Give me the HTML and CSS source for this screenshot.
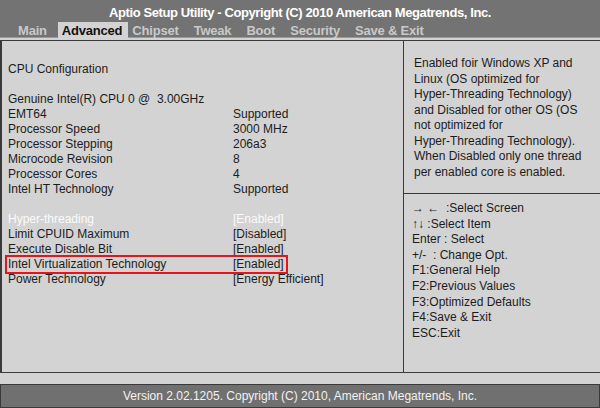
FILE: index.html
```html
<!DOCTYPE html>
<html lang="en">
<head>
    <meta charset="UTF-8">
    <title>Aptio Setup Utility</title>
    <link rel="stylesheet" href="styles.css">
</head>
<body>
    <div class="bios">
        <div class="header">
            <div class="title">Aptio Setup Utility - Copyright (C) 2010 American Megatrends, Inc.</div>
            <div class="tabs">
                <span class="tab">Main</span>
                <span class="tab active">Advanced</span>
                <span class="tab">Chipset</span>
                <span class="tab">Tweak</span>
                <span class="tab">Boot</span>
                <span class="tab">Security</span>
                <span class="tab">Save &amp; Exit</span>
            </div>
        </div>
        <div class="strip"></div>
        <div class="main">
            <div class="settings">
                <div class="section">CPU Configuration</div>
                <div class="row"><span>Genuine Intel(R) CPU 0 @&nbsp; 3.00GHz</span></div>
                <div class="row"><span>EMT64</span><span class="val">Supported</span></div>
                <div class="row"><span>Processor Speed</span><span class="val">3000 MHz</span></div>
                <div class="row"><span>Processor Stepping</span><span class="val">206a3</span></div>
                <div class="row"><span>Microcode Revision</span><span class="val">8</span></div>
                <div class="row"><span>Processor Cores</span><span class="val">4</span></div>
                <div class="row"><span>Intel HT Technology</span><span class="val">Supported</span></div>
                <div class="row blank"></div>
                <div class="row selected"><span>Hyper-threading</span><span class="val">[Enabled]</span></div>
                <div class="row"><span>Limit CPUID Maximum</span><span class="val">[Disabled]</span></div>
                <div class="row"><span>Execute Disable Bit</span><span class="val">[Enabled]</span></div>
                <div class="row marked"><span>Intel Virtualization Technology</span><span class="val">[Enabled]</span></div>
                <div class="row"><span>Power Technology</span><span class="val">[Energy Efficient]</span></div>
            </div>
            <div class="side">
                <div class="help">
                    Enabled foir Windows XP and<br>
                    Linux (OS optimized for<br>
                    Hyper-Threading Technology)<br>
                    and Disabled for other OS (OS<br>
                    not optimized for<br>
                    Hyper-Threading Technology).<br>
                    When Disabled only one thread<br>
                    per enabled core is enabled.
                </div>
                <div class="keys">
                    <div>&rarr; &larr; &nbsp;:Select Screen</div>
                    <div>&uarr;&darr; :Select Item</div>
                    <div>Enter : Select</div>
                    <div>+/- &nbsp;: Change Opt.</div>
                    <div>F1:General Help</div>
                    <div>F2:Previous Values</div>
                    <div>F3:Optimized Defaults</div>
                    <div>F4:Save &amp; Exit</div>
                    <div>ESC:Exit</div>
                </div>
            </div>
        </div>
        <div class="strip bottom"></div>
        <div class="footer">Version 2.02.1205. Copyright (C) 2010, American Megatrends, Inc.</div>
    </div>
</body>
</html>
```
FILE: styles.css
```css
body {
    margin: 0;
    font-family: "Liberation Sans", Arial, sans-serif;
    background-color: #d3d3d3;
    color: #1c1c1c;
}

.bios {
    width: 600px;
    height: 408px;
    display: flex;
    flex-direction: column;
}

.header {
    background-color: #737373;
    height: 38px;
    border-bottom: 1px solid #9a9a9a;
    box-sizing: border-box;
}

.title {
    color: #fff;
    font-weight: bold;
    font-size: 13px;
    letter-spacing: -0.4px;
    text-align: center;
    padding-top: 5px;
    height: 16px;
}

.tabs {
    display: flex;
    padding-left: 14px;
    margin-top: 1px;
}

.tab {
    color: #c9c9c9;
    font-weight: bold;
    font-size: 13px;
    letter-spacing: -0.2px;
    padding: 1px 4px;
    margin-right: 7px;
    height: 14px;
}

.tab.active {
    background-color: #d3d3d3;
    color: #111;
    padding: 1px 6px 2px 4px;
    margin-right: 0;
}

.strip {
    height: 2px;
}

.main {
    flex: 1;
    display: grid;
    grid-template-columns: 401px 1fr;
    border-top: 1px solid #3a3a3a;
    border-bottom: 1px solid #3a3a3a;
    border-left: 2px solid #3a3a3a;
}

.settings {
    padding: 21px 0 0 6px;
    font-size: 12px;
}

.section {
    height: 15px;
    margin-bottom: 15px;
}

.row {
    display: grid;
    grid-template-columns: 225px 1fr;
    height: 15px;
    line-height: 15px;
}

.row.selected {
    color: #fafafa;
}

.row.marked {
    outline: 2px solid #e8141b;
    width: 278px;
    margin-left: -1px;
    padding-left: 1px;
    height: 15px;
}

.side {
    border-left: 1px solid #3a3a3a;
    display: flex;
    flex-direction: column;
    font-size: 12px;
}

.help {
    padding: 15px 4px 0 10px;
    height: 137px;
    line-height: 15.5px;
    white-space: nowrap;
    border-bottom: 1px solid #3a3a3a;
}

.keys {
    padding: 7px 8px 0 8px;
    line-height: 15.6px;
}

.strip.bottom {
    height: 11px;
}

.footer {
    background-color: #707070;
    color: #f2f2f2;
    border: 1px solid #3a3a3a;
    font-size: 12px;
    text-align: center;
    height: 24px;
    line-height: 22px;
    box-sizing: border-box;
}
```
